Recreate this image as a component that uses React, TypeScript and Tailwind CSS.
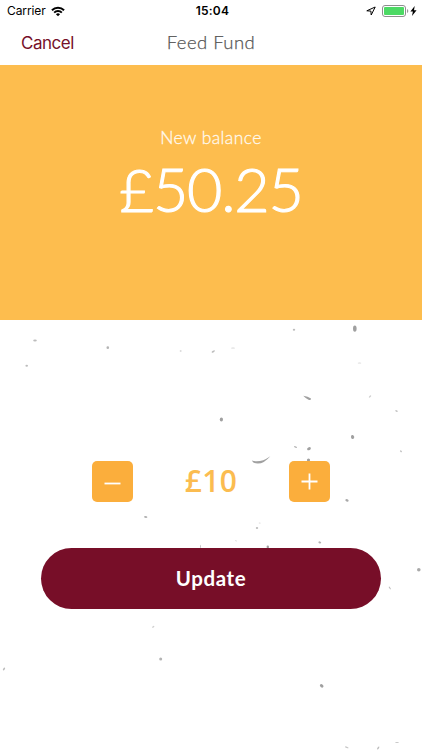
import { useState } from "react";

// x, y, rx, ry, rotation, opacity
const specks = [
  [35, 340.5, 1.8, 0.9, 0, 0.7],
  [107.8, 347.7, 1.3, 1.4, 0, 0.8],
  [26.7, 365.7, 1.3, 1, 0, 0.7],
  [180.7, 351, 1, 0.8, 0, 0.5],
  [213.3, 351.5, 1.8, 0.8, -30, 0.7],
  [233, 348, 2, 0.6, 0, 0.45],
  [294, 329.7, 1.2, 1, 0, 0.7],
  [354.8, 328.6, 1.8, 3.2, 0, 1],
  [359.5, 363, 1.8, 0.5, 0, 0.4],
  [370, 396.5, 1.5, 0.7, -45, 0.5],
  [396.5, 411, 1.4, 0.8, 35, 0.6],
  [221.4, 419.5, 1.6, 2.1, 0, 1],
  [352.6, 437, 1.6, 2, -15, 1],
  [295.5, 447, 1.7, 0.7, 25, 0.7],
  [309, 448.7, 2, 1.4, -30, 1],
  [401, 451.3, 1.2, 0.8, 40, 0.6],
  [308.5, 460, 1.6, 1.6, 0, 1],
  [347, 500.3, 1.7, 1.2, 20, 0.9],
  [145.7, 517, 1.7, 1, 10, 0.8],
  [259.7, 523, 1, 0.6, 0, 0.4],
  [257, 528, 1.2, 1, 0, 0.7],
  [236, 540.7, 1, 0.5, 30, 0.35],
  [319.8, 542.4, 1.4, 1, 10, 0.8],
  [267.8, 547, 1.2, 1.4, 0, 1],
  [200.4, 546.5, 0.4, 1.8, 0, 0.8],
  [418.8, 569.8, 1.8, 1.7, 0, 0.9],
  [389.8, 588, 1.6, 0.6, 55, 0.7],
  [153.2, 626.8, 1.3, 0.7, -30, 0.5],
  [160.7, 659, 1.5, 1.5, 0, 0.8],
  [4, 669, 1.6, 0.8, -55, 0.7],
  [321.7, 685.8, 2, 1.5, 40, 1],
  [397, 742.5, 1.9, 0.5, 0, 0.6],
  [346.8, 747.3, 1.9, 0.7, 20, 0.6],
  [378.2, 748, 1.7, 0.7, -55, 0.7],
];

const SpeckledPaper = () => (
  <svg className="absolute inset-0 pointer-events-none" width="422" height="430" viewBox="0 320 422 430">
    <g fill="#a0a0a0">
      {specks.map(([x, y, rx, ry, angle, opacity]) => (
        <ellipse
          key={`${x}-${y}`}
          cx={x}
          cy={y}
          rx={rx}
          ry={ry}
          opacity={opacity}
          transform={`rotate(${angle} ${x} ${y})`}
        />
      ))}
      <path d="M303.2 395.8Q308 396.4 311 398.4Q311.2 400.6 308.5 399.8Q306 398.7 303.2 395.8Z" />
      <path d="M251.8 460.5Q260 463.5 270.3 456.2Q264 463.6 257.8 463.6Q253 463.5 251.8 460.5Z" />
    </g>
  </svg>
);

const StatusBar = () => (
  <div className="h-[22px] px-[7px] grid grid-cols-3 items-center text-black">
    <div className="flex items-center gap-[5px]">
      <span className="font-['Inter'] text-[12px] tracking-[-0.1px]">Carrier</span>
      <svg width="14" height="11" viewBox="0 0 15 11" fill="none" stroke="currentColor" strokeWidth="2.1">
        <path d="M1 4.1a9.2 9.2 0 0 1 13 0" />
        <path d="M3.4 6.7a5.8 5.8 0 0 1 8.2 0" />
        <path d="M5.3 8.4a3.1 3.1 0 0 1 4.4 0L7.5 10.6z" fill="currentColor" stroke="none" />
      </svg>
    </div>
    <span className="pl-[3px] font-['Inter'] text-[12px] font-semibold text-center tracking-[0.2px]">15:04</span>
    <div className="flex items-center justify-end">
      <svg width="10" height="10" viewBox="0 0 10 10" fill="none" stroke="currentColor" strokeWidth="1" strokeLinejoin="round">
        <path d="M9.2 1L.8 4.8l4.1.3.3 3.9z" />
      </svg>
      <svg className="ml-[6px]" width="27" height="12" viewBox="0 0 27 12">
        <rect x="0.5" y="0.5" width="23" height="11" rx="2.5" fill="none" stroke="#8e8e8e" />
        <rect x="2" y="2" width="20" height="8" rx="1" fill="#4cd964" />
        <path d="M25 4v4q1.3-.6 1.3-2T25 4z" fill="#999" />
      </svg>
      <svg className="ml-[1px] -mr-[2px]" width="7" height="10" viewBox="0 0 7 10" fill="currentColor">
        <path d="M4.7 0L.4 5.6h2.5L2 10l4.6-5.8H4z" />
      </svg>
    </div>
  </div>
);

const App = () => {
  const [amount, setAmount] = useState(10);

  return (
    <div className="w-[422px] h-[750px] mx-auto bg-white overflow-hidden flex flex-col font-['Lato',sans-serif]">
      <StatusBar />
      <div className="h-[43px] px-[21px] grid grid-cols-3 items-center">
        <button className="justify-self-start font-['Inter'] text-[17px] leading-none tracking-[-0.5px] text-[#76102a]">Cancel</button>
        <h1 className="pb-[2px] text-center text-[18.5px] leading-none font-light text-[#555] tracking-[0.45px] [-webkit-text-stroke:0.25px_#555]">
          Feed Fund
        </h1>
      </div>
      <div className="h-[255px] pt-[62px] bg-[#fdbd4e] text-white flex flex-col items-center">
        <p className="text-[17.5px] leading-[22px] font-light text-[#fff9ed] tracking-[0.4px] [-webkit-text-stroke:0.3px_#fff9ed]">
          New balance
        </p>
        <p className="text-[61px] leading-[80px] font-light tracking-[-1.2px] [-webkit-text-stroke:1.1px_#fff]">
          <span className="inline-block text-[60px]">£</span>
          {(40.25 + amount).toFixed(2)}
        </p>
      </div>
      <div className="relative h-[430px] flex flex-col items-center">
        <SpeckledPaper />
        <div className="relative mt-[141px] w-[238px] h-[41px] flex items-center justify-between">
          <button
            className="size-[41px] rounded-[5px] bg-[#fbae3c] flex items-center justify-center"
            onClick={() => setAmount(Math.max(0, amount - 10))}
          >
            <svg width="17" height="17" viewBox="0 0 17 17" stroke="#fff" strokeWidth="1.8">
              <path d="M.5 10.5h16" />
            </svg>
          </button>
          <span className="pb-[1px] font-['Open_Sans'] text-[30px] leading-none font-semibold tracking-[0.4px] text-[#fbbc50]">£{amount}</span>
          <button
            className="size-[41px] rounded-[5px] bg-[#fbae3c] flex items-center justify-center"
            onClick={() => setAmount(amount + 10)}
          >
            <svg width="17" height="17" viewBox="0 0 17 17" stroke="#fff" strokeWidth="1.8">
              <path d="M.5 8.5h16M8.5.5v16" />
            </svg>
          </button>
        </div>
        <button className="relative mt-[45.5px] w-[340px] h-[61px] rounded-full bg-[#770e28] text-white text-[20.5px] font-bold tracking-[0.6px]">
          Update
        </button>
      </div>
    </div>
  );
};

export default App;
